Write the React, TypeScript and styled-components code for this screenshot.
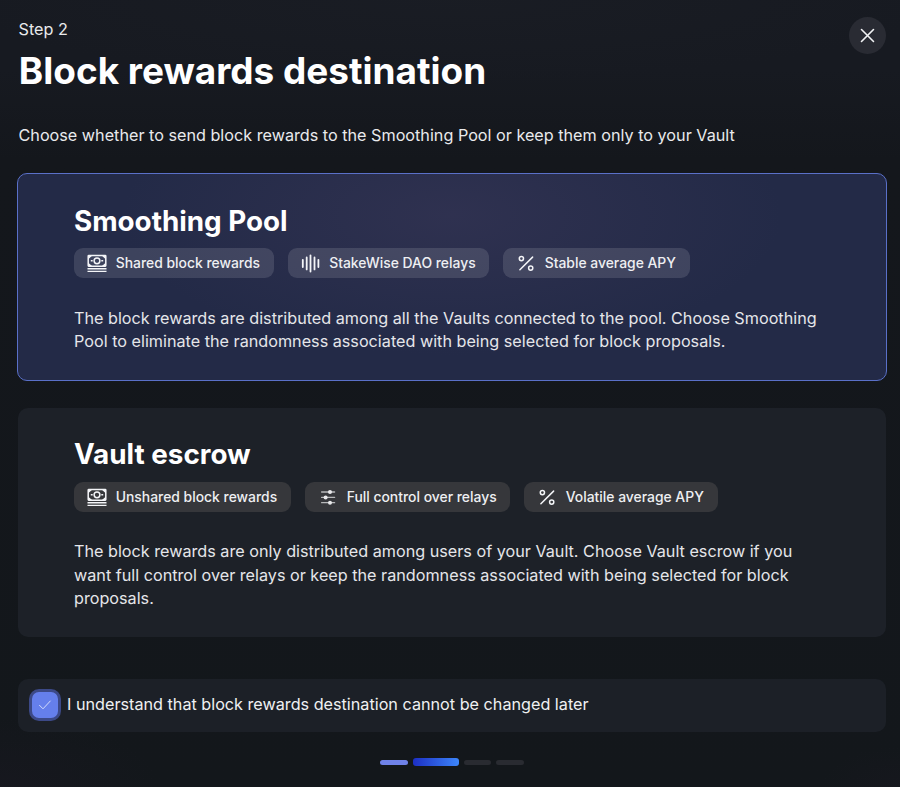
import React from "react";
import styled, { createGlobalStyle, css } from "styled-components";

const GlobalStyle = createGlobalStyle`
  * { box-sizing: border-box; }
  body { margin: 0; background: #14171c; }
`;

const Page = styled.main`
  width: 900px;
  height: 787px;
  overflow: hidden;
  padding: 17px 14px 0 18px;
  display: flex;
  flex-direction: column;
  font-family: Inter, sans-serif;
  color: #fff;
  background:
    radial-gradient(ellipse 500px 80px at 50% 0, rgba(31, 34, 42, 0.3), transparent),
    radial-gradient(ellipse 160px 70px at 0 100%, rgba(26, 24, 34, 0.5), transparent),
    radial-gradient(ellipse 80px 40px at 100% 100%, rgba(26, 24, 34, 0.4), transparent),
    linear-gradient(180deg, #171a21 0, #171a21 70px, #14171c 160px, #13171b 100%);
`;

const Header = styled.header`
  display: flex;
  justify-content: space-between;
  align-items: flex-start;
  height: 80px;
`;

const Step = styled.p`
  margin: 0 0 0 0.5px;
  font-size: 16.2px;
  line-height: 24px;
  color: #e9eaec;
`;

const Title = styled.h1`
  margin: 5px 0 0 0.8px;
  font-size: 36.95px;
  line-height: 49px;
  font-weight: 700;
`;

const CloseButton = styled.button`
  width: 37px;
  height: 37px;
  padding: 0;
  border: 0;
  border-radius: 50%;
  background: #292b33;
  color: #f1f2f4;
  display: grid;
  place-items: center;
`;

const Intro = styled.p`
  margin: 26px 0 26px 0.5px;
  font-size: 16.2px;
  line-height: 24px;
  color: #e9eaec;
`;

const Card = styled.section<{ $selected?: boolean }>`
  border-radius: 10px;
  ${({ $selected }) =>
    $selected
      ? css`
          width: 870px;
          height: 208px;
          margin-left: -1px;
          padding: 29px 50px 0 56px;
          border: 1px solid #5a70c8;
          background:
            radial-gradient(ellipse 330px 140px at 50% 20%, rgba(55, 54, 86, 0.6), transparent),
            #232a47;
        `
      : css`
          width: 868px;
          height: 229px;
          margin-top: 27px;
          padding: 28px 50px 0 56px;
          background: #1d2128;
        `}
`;

const CardTitle = styled.h2`
  margin: 0;
  font-size: 27.8px;
  line-height: 36px;
  font-weight: 700;
`;

const Tags = styled.div<{ $tinted?: boolean }>`
  display: flex;
  gap: 14px;
  margin-top: ${({ $tinted }) => ($tinted ? 9 : 10)}px;
`;

const Tag = styled.span<{ $width: number; $tinted?: boolean }>`
  display: flex;
  align-items: center;
  width: ${({ $width }) => $width}px;
  height: 30px;
  padding-left: 12px;
  gap: 8.7px;
  border-radius: 9px;
  background: ${({ $tinted }) => ($tinted ? "rgba(255, 255, 255, 0.12)" : "#36373b")};
  color: #eeeff2;
  font-size: 13.9px;
  line-height: 20px;
  font-weight: 500;
  white-space: nowrap;

  svg { flex: none; }
`;

const Description = styled.p<{ $tinted?: boolean }>`
  margin: ${({ $tinted }) => ($tinted ? 29 : 28.3)}px 0 0;
  font-size: 16.2px;
  line-height: 23.2px;
  color: #e5e6ea;
`;

const Confirm = styled.label`
  display: flex;
  align-items: center;
  width: 868px;
  height: 53px;
  margin-top: 42px;
  padding: 0 11px;
  border-radius: 10px;
  background: #1c2027;
`;

const CheckBox = styled.span`
  width: 32px;
  height: 32px;
  margin-bottom: 1px;
  border: 3px solid #3c4987;
  border-radius: 10px;
  background: #657fec;
  display: grid;
  place-items: center;
`;

const ConfirmText = styled.span`
  margin: 0 0 3px 6px;
  font-size: 16.2px;
  line-height: 24px;
  color: #eff0f2;
`;

const Progress = styled.div`
  display: flex;
  align-items: center;
  justify-content: center;
  width: 868px;
  height: 8px;
  margin-top: 26px;
  gap: 5px;
`;

const Segment = styled.i<{ $state: "done" | "current" | "todo" }>`
  width: ${({ $state }) => ($state === "current" ? 46 : 27.5)}px;
  height: ${({ $state }) => ($state === "current" ? 8 : 5)}px;
  border-radius: 3px;
  background: ${({ $state }) =>
    ({ done: "#6f82e8", current: "linear-gradient(90deg, #1c2fc4, #3d86fa)", todo: "#292b31" })[$state]};
`;

type IconName = "money" | "bars" | "percent" | "sliders";

const Icon = ({ name }: { name: IconName }) => (
  <svg width="21" height="21" viewBox="0 0 21 21" fill="none" stroke="#f4f5f8" strokeLinecap="round">
    {name === "money" && (
      <g strokeLinecap="butt">
        <rect x="2.2" y="2.4" width="17.6" height="10.8" rx="0.6" strokeWidth="1.5" />
        <path d="M2 2.4h4.4L2 6.4zM20 2.4h-4.4L20 6.4zM2 13.2h4.4L2 9.4zM20 13.2h-4.4L20 9.4z" fill="#f4f5f8" stroke="none" />
        <circle cx="11" cy="7.8" r="2.9" strokeWidth="1.5" />
        <path d="M4.8 7.8h1.9M15.3 7.8h1.9" strokeWidth="1.6" />
        <path d="M1.5 15.7h19M1.5 18.4h19" strokeWidth="1.4" />
      </g>
    )}
    {name === "bars" && (
      <path d="M2.8 6.8v7.2M6.7 4.4v12M10.5 2.3v16.2M14.5 4.4v12M18.4 6.8v7.2" strokeWidth="1.8" />
    )}
    {name === "percent" && (
      <g strokeWidth="1.5">
        <path d="M4.9 16.8 17.6 4.1" />
        <circle cx="6.4" cy="5.6" r="2.1" />
        <circle cx="15.7" cy="15.1" r="2.1" />
      </g>
    )}
    {name === "sliders" && (
      <g stroke="#b7b8ba" strokeWidth="1.3">
        <path d="M4.6 5h13M4.6 10.4h13M4.6 15.7h13" />
        <g fill="#e9e9eb" stroke="none">
          <circle cx="13" cy="5" r="2" />
          <circle cx="8.6" cy="10.4" r="2" />
          <circle cx="13" cy="15.7" r="2" />
        </g>
      </g>
    )}
  </svg>
);

interface Option {
  title: string;
  selected: boolean;
  tags: { icon: IconName; label: string; width: number }[];
  lines: string[];
}

const options: Option[] = [
  {
    title: "Smoothing Pool",
    selected: true,
    tags: [
      { icon: "money", label: "Shared block rewards", width: 199.5 },
      { icon: "bars", label: "StakeWise DAO relays", width: 201.5 },
      { icon: "percent", label: "Stable average APY", width: 187 },
    ],
    lines: [
      "The block rewards are distributed among all the Vaults connected to the pool. Choose Smoothing",
      "Pool to eliminate the randomness associated with being selected for block proposals.",
    ],
  },
  {
    title: "Vault escrow",
    selected: false,
    tags: [
      { icon: "money", label: "Unshared block rewards", width: 217 },
      { icon: "sliders", label: "Full control over relays", width: 205 },
      { icon: "percent", label: "Volatile average APY", width: 194 },
    ],
    lines: [
      "The block rewards are only distributed among users of your Vault. Choose Vault escrow if you",
      "want full control over relays or keep the randomness associated with being selected for block",
      "proposals.",
    ],
  },
];

export default function App() {
  return (
    <Page>
      <GlobalStyle />
      <Header>
        <div>
          <Step>Step 2</Step>
          <Title>Block rewards destination</Title>
        </div>
        <CloseButton aria-label="Close">
          <svg width="15" height="15" viewBox="0 0 15 15" stroke="currentColor" strokeWidth="1.6" strokeLinecap="round">
            <path d="M1.5 1.5l12 12M13.5 1.5l-12 12" />
          </svg>
        </CloseButton>
      </Header>
      <Intro>Choose whether to send block rewards to the Smoothing Pool or keep them only to your Vault</Intro>
      {options.map((o) => (
        <Card key={o.title} $selected={o.selected}>
          <CardTitle>{o.title}</CardTitle>
          <Tags $tinted={o.selected}>
            {o.tags.map((t) => (
              <Tag key={t.label} $width={t.width} $tinted={o.selected}>
                <Icon name={t.icon} />
                {t.label}
              </Tag>
            ))}
          </Tags>
          <Description $tinted={o.selected}>
            {o.lines.map((line, i) => (
              <React.Fragment key={line}>
                {i > 0 && <br />}
                {line}
              </React.Fragment>
            ))}
          </Description>
        </Card>
      ))}
      <Confirm>
        <CheckBox>
          <svg width="14" height="12" viewBox="0 0 14 12" fill="none" stroke="#d5dcfb" strokeLinecap="round" strokeLinejoin="round">
            <path d="M1.5 6.3 5 9.8 12.3 2" />
          </svg>
        </CheckBox>
        <ConfirmText>I understand that block rewards destination cannot be changed later</ConfirmText>
      </Confirm>
      <Progress>
        <Segment $state="done" />
        <Segment $state="current" />
        <Segment $state="todo" />
        <Segment $state="todo" />
      </Progress>
    </Page>
  );
}
